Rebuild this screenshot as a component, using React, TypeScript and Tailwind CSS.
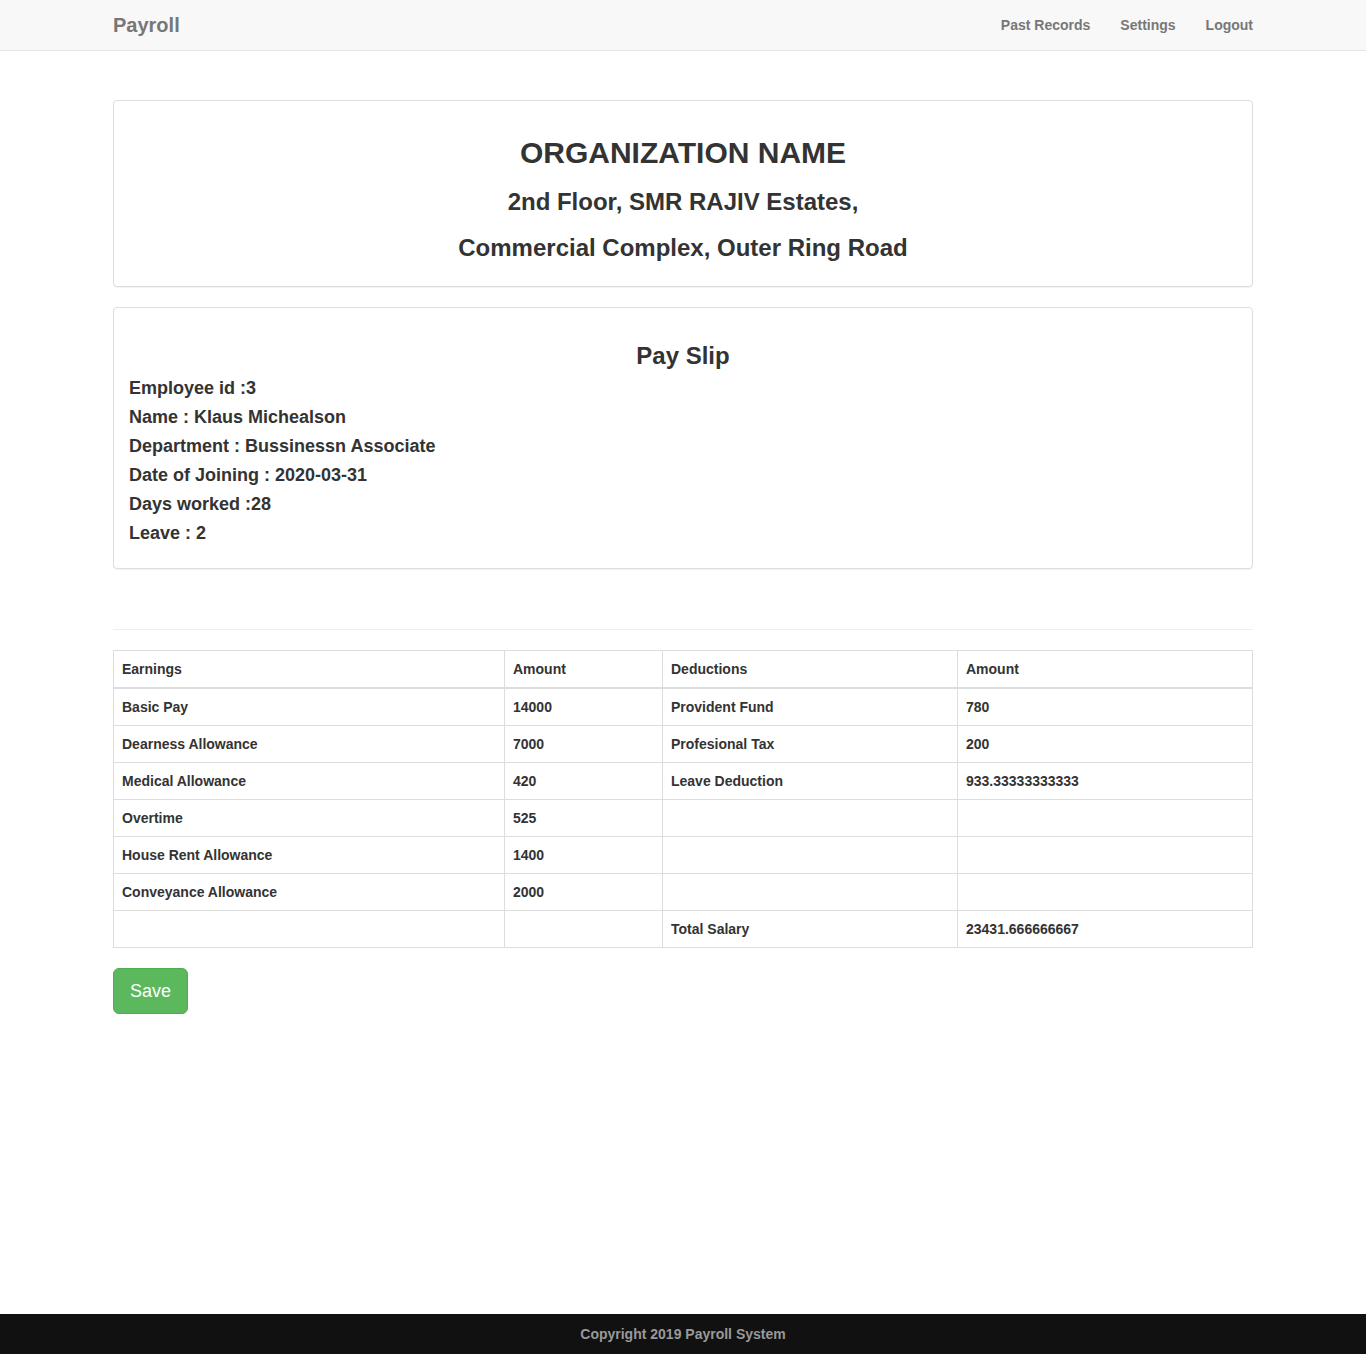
export default function App() {
  const rows = [
    ["Basic Pay", "14000", "Provident Fund", "780"],
    ["Dearness Allowance", "7000", "Profesional Tax", "200"],
    ["Medical Allowance", "420", "Leave Deduction", "933.33333333333"],
    ["Overtime", "525", "", ""],
    ["House Rent Allowance", "1400", "", ""],
    ["Conveyance Allowance", "2000", "", ""],
    ["", "", "Total Salary", "23431.666666667"],
  ];

  const info = [
    "Employee id :3",
    "Name : Klaus Michealson",
    "Department : Bussinessn Associate",
    "Date of Joining : 2020-03-31",
    "Days worked :28",
    "Leave : 2",
  ];

  return (
    <div className="min-h-screen flex flex-col bg-white text-[#333] font-['Liberation_Sans',Arial,sans-serif]">
      <nav className="h-[51px] bg-[#f8f8f8] border-b border-[#e7e7e7]">
        <div className="w-[1140px] mx-auto h-[50px] flex items-center justify-between">
          <a href="#" className="text-[20px] font-bold text-[#777]">Payroll</a>
          <div className="flex -mr-[15px]">
            <a href="#" className="px-[15px] text-[14px] font-bold text-[#777]">Past Records</a>
            <a href="#" className="px-[15px] text-[14px] font-bold text-[#777]">Settings</a>
            <a href="#" className="px-[15px] text-[14px] font-bold text-[#777]">Logout</a>
          </div>
        </div>
      </nav>

      <main className="flex-1">
        <div className="w-[1140px] mx-auto pt-[49px]">
          <div className="border border-[#ddd] rounded shadow-[0_1px_1px_rgba(0,0,0,0.05)] px-[15px] pt-[35px] pb-[24px] text-center">
            <h2 className="text-[30px] leading-[33px] font-bold">ORGANIZATION NAME</h2>
            <h3 className="mt-[20px] text-[24px] leading-[26.4px] font-bold">2nd Floor, SMR RAJIV Estates,</h3>
            <h3 className="mt-[20px] text-[24px] leading-[26.4px] font-bold">Commercial Complex, Outer Ring Road</h3>
          </div>

          <div className="mt-[20px] border border-[#ddd] rounded shadow-[0_1px_1px_rgba(0,0,0,0.05)] px-[15px] pt-[35px] pb-[25px]">
            <h3 className="text-center text-[24px] leading-[26.4px] font-bold">Pay Slip</h3>
            <div className="flex flex-col gap-[10px] mt-[10px]">
              {info.map((t) => (
                <h4 key={t} className="text-[18px] leading-[19px] font-bold">{t}</h4>
              ))}
            </div>
          </div>

          <hr className="mt-[60px] mb-[20px] border-0 border-t border-[#eee]" />

          <table className="w-[1139px] table-fixed border-collapse border border-[#ddd] text-[14px] leading-[20px] font-bold">
            <colgroup>
              <col className="w-[391px]" />
              <col className="w-[158px]" />
              <col className="w-[295px]" />
              <col className="w-[295px]" />
            </colgroup>
            <thead>
              <tr>
                <th className="text-left p-[8px] border border-[#ddd] border-b-2">Earnings</th>
                <th className="text-left p-[8px] border border-[#ddd] border-b-2">Amount</th>
                <th className="text-left p-[8px] border border-[#ddd] border-b-2">Deductions</th>
                <th className="text-left p-[8px] border border-[#ddd] border-b-2">Amount</th>
              </tr>
            </thead>
            <tbody>
              {rows.map((r, i) => (
                <tr key={i}>
                  {r.map((c, j) => (
                    <td key={j} className="p-[8px] h-[37px] border border-[#ddd]">{c}</td>
                  ))}
                </tr>
              ))}
            </tbody>
          </table>

          <button className="mt-[20px] px-[16px] py-[10px] text-[18px] leading-[24px] text-white bg-[#5cb85c] border border-[#4cae4c] rounded-md">
            Save
          </button>
        </div>
      </main>

      <footer className="h-[40px] bg-[#111] flex items-center justify-center">
        <p className="text-[14px] font-bold text-[#999]">Copyright 2019 Payroll System</p>
      </footer>
    </div>
  );
}
